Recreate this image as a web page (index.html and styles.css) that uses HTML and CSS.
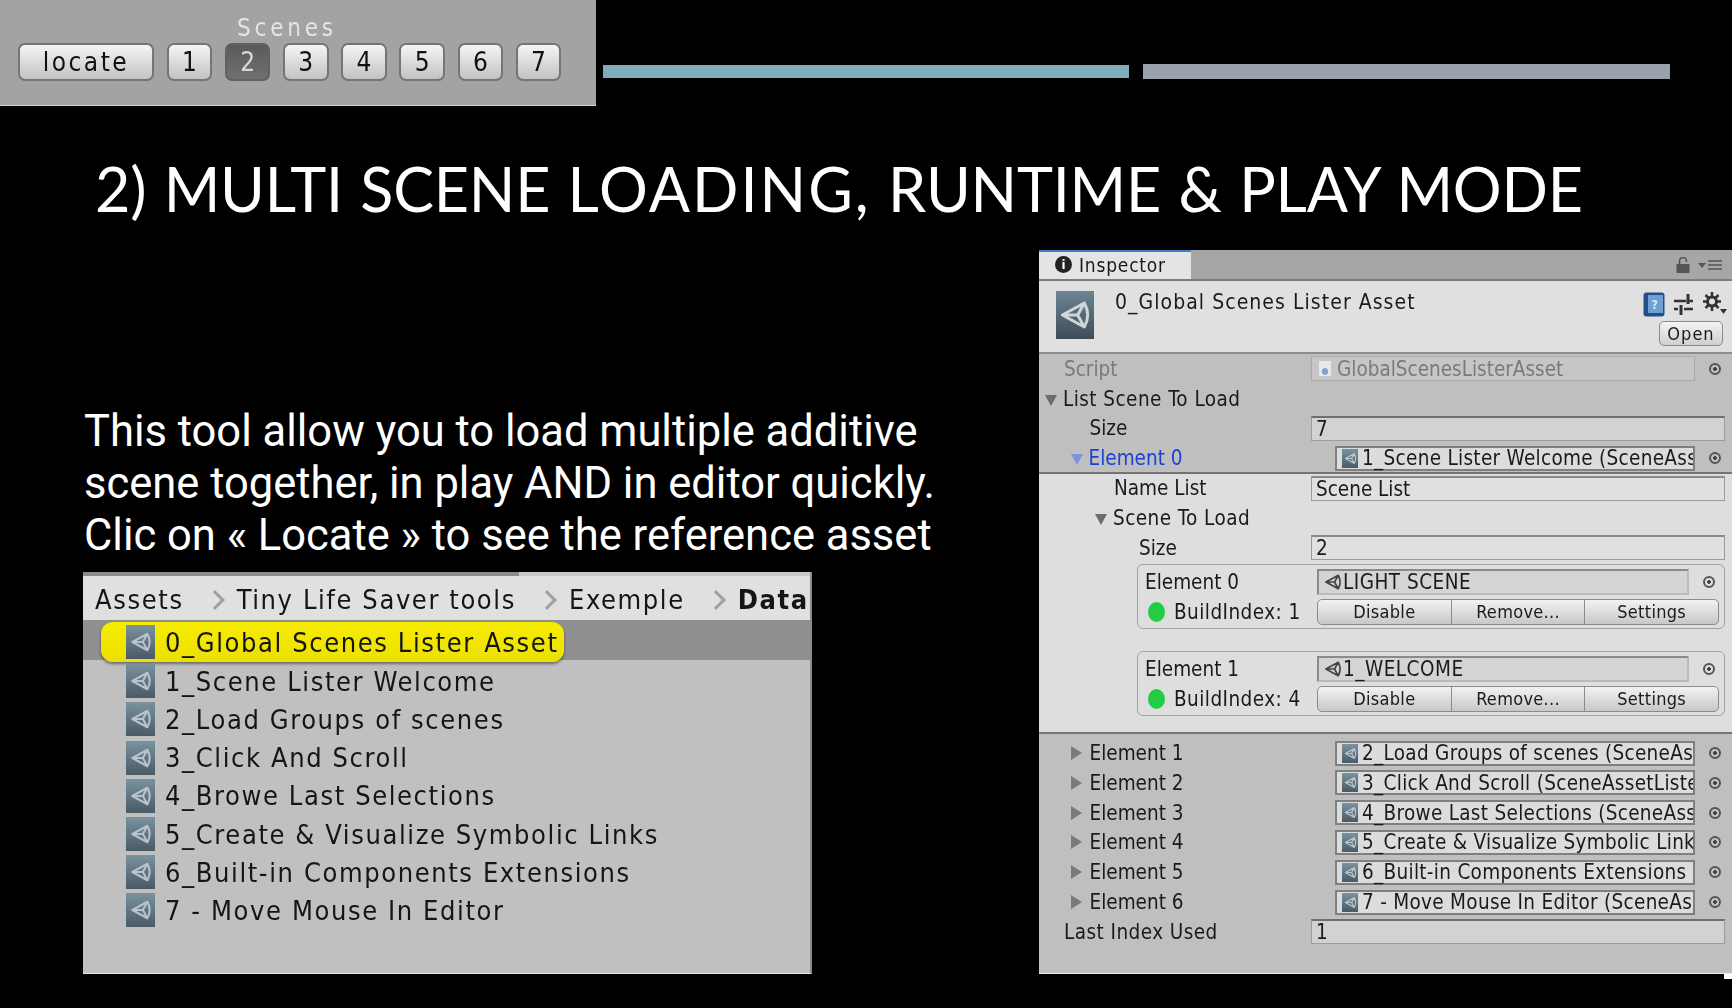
FILE: index.html
```html
<!DOCTYPE html>
<html lang="en">
<head>
    <meta charset="UTF-8">
    <title>Multi Scene Loading</title>
    <link rel="stylesheet" href="styles.css">
</head>
<body>
    <svg class="defs" width="0" height="0">
        <symbol id="unity" viewBox="0 0 24 24">
            <path d="M19 3 L2.5 12 L19 21 Q24 12 19 3 Z M14 12 H2.5 M14 12 L19 3 M14 12 L19 21" fill="none" stroke="currentColor" stroke-width="2.2" stroke-linejoin="round"/>
        </symbol>
    </svg>

    <div class="slide">
        <div class="top">
            <div class="toolbar">
                <div class="caption">Scenes</div>
                <div class="scene-buttons">
                    <span class="scene-btn locate">locate</span>
                    <span class="scene-btn">1</span>
                    <span class="scene-btn active">2</span>
                    <span class="scene-btn">3</span>
                    <span class="scene-btn">4</span>
                    <span class="scene-btn">5</span>
                    <span class="scene-btn">6</span>
                    <span class="scene-btn">7</span>
                </div>
            </div>
            <div class="bar bar-teal"></div>
            <div class="bar bar-grey"></div>
        </div>

        <h1>2) MULTI SCENE <span class="stretch">LOADING,</span> RUNTIME &amp; PLAY MODE</h1>

        <div class="main">
            <div class="left">
                <p class="intro">This tool allow you to load multiple additive<br>scene together, in play AND in editor quickly.<br>Clic on « Locate » to see the reference asset</p>
                <div class="project">
                    <div class="project-strip"></div>
                    <div class="crumbs">
                        <span class="crumb">Assets</span>
                        <span class="chev"></span>
                        <span class="crumb">Tiny Life Saver tools</span>
                        <span class="chev"></span>
                        <span class="crumb">Exemple</span>
                        <span class="chev"></span>
                        <span class="crumb strong">Data</span>
                    </div>
                    <div class="files">
                        <div class="file current"><span class="file-icon"><svg><use href="#unity"/></svg></span>0_Global Scenes Lister Asset</div>
                        <div class="file"><span class="file-icon"><svg><use href="#unity"/></svg></span>1_Scene Lister Welcome</div>
                        <div class="file"><span class="file-icon"><svg><use href="#unity"/></svg></span>2_Load Groups of scenes</div>
                        <div class="file"><span class="file-icon"><svg><use href="#unity"/></svg></span>3_Click And Scroll</div>
                        <div class="file"><span class="file-icon"><svg><use href="#unity"/></svg></span>4_Browe Last Selections</div>
                        <div class="file"><span class="file-icon"><svg><use href="#unity"/></svg></span>5_Create &amp; Visualize Symbolic Links</div>
                        <div class="file"><span class="file-icon"><svg><use href="#unity"/></svg></span>6_Built-in Components Extensions</div>
                        <div class="file"><span class="file-icon"><svg><use href="#unity"/></svg></span>7 - Move Mouse In Editor</div>
                    </div>
                </div>
            </div>

            <div class="inspector">
                <div class="tabbar">
                    <div class="tab"><span class="info">i</span>Inspector</div>
                    <div class="tab-tools">
                        <svg width="14" height="16" viewBox="0 0 14 16"><path d="M3.5 7V4a3.5 3.5 0 0 1 7 0V5" fill="none" stroke="#555" stroke-width="1.6"/><rect x="0.5" y="7" width="13" height="9" fill="#555"/></svg>
                        <svg width="24" height="12" viewBox="0 0 24 12"><path d="M0 4h8l-4 5z" fill="#555"/><path d="M10 2h14M10 6h14M10 10h14" stroke="#555" stroke-width="1.6"/></svg>
                    </div>
                </div>
                <div class="asset-head">
                    <span class="asset-icon"><svg><use href="#unity"/></svg></span>
                    <div class="asset-name">0_Global Scenes Lister Asset</div>
                    <div class="asset-tools">
                        <div class="asset-icons">
                            <svg width="22" height="25" viewBox="0 0 22 25"><rect x="0.5" y="0.5" width="21" height="24" rx="3" fill="#1f4f86"/><rect x="5" y="3" width="15" height="18" fill="#6f9fd6"/><text x="8.5" y="17" font-size="12" font-weight="bold" font-family="DejaVu Sans" fill="#d8e6f4">?</text></svg>
                            <svg width="19" height="21" viewBox="0 0 19 21"><path d="M0 7h12M15 7h4M0 15h4M10 15h9" stroke="#333" stroke-width="2.4"/><path d="M14 0v10M7 11v10" stroke="#333" stroke-width="3"/></svg>
                            <svg width="25" height="24" viewBox="0 0 25 24"><circle cx="10" cy="9.5" r="4.5" fill="none" stroke="#333" stroke-width="3"/><path d="M10 0v4M10 15v4M1 9.5h4M15 9.5h4M3.5 3l3 3M13.5 13l3 3M16.500 3l-3 3M6.500 13l-3 3" stroke="#333" stroke-width="2.6"/><path d="M18 17h7l-3.500 5z" fill="#333"/></svg>
                        </div>
                        <span class="open-btn">Open</span>
                    </div>
                </div>

                <div class="row script">
                    <div class="label lv0">Script</div>
                    <div class="field disabled"><span class="script-icon"></span>GlobalScenesListerAsset</div>
                    <span class="picker"></span>
                </div>
                <div class="row">
                    <div class="label lv0 open wide">List Scene To Load</div>
                </div>
                <div class="row">
                    <div class="label lv1">Size</div>
                    <div class="field">7</div>
                </div>
                <div class="row">
                    <div class="label lv1 open blue">Element 0</div>
                    <div class="ref"><span class="ref-icon"><svg><use href="#unity"/></svg></span>1_Scene Lister Welcome (SceneAssetLister)</div>
                    <span class="picker"></span>
                </div>

                <div class="expanded">
                    <div class="row">
                        <div class="label lv2">Name List</div>
                        <div class="field light">Scene List</div>
                    </div>
                    <div class="row">
                        <div class="label lv2 open wide">Scene To Load</div>
                    </div>
                    <div class="row">
                        <div class="label lv3">Size</div>
                        <div class="field light">2</div>
                    </div>

                    <div class="scene-box">
                        <div class="box-row">
                            <div class="box-label">Element 0</div>
                            <div class="obj"><svg class="obj-icon"><use href="#unity"/></svg>LIGHT SCENE</div>
                            <span class="picker"></span>
                        </div>
                        <div class="box-row">
                            <div class="box-label wide"><span class="dot"></span>BuildIndex: 1</div>
                            <div class="btn-group"><span>Disable</span><span>Remove...</span><span>Settings</span></div>
                        </div>
                    </div>
                    <div class="scene-box">
                        <div class="box-row">
                            <div class="box-label">Element 1</div>
                            <div class="obj"><svg class="obj-icon"><use href="#unity"/></svg>1_WELCOME</div>
                            <span class="picker"></span>
                        </div>
                        <div class="box-row">
                            <div class="box-label wide"><span class="dot"></span>BuildIndex: 4</div>
                            <div class="btn-group"><span>Disable</span><span>Remove...</span><span>Settings</span></div>
                        </div>
                    </div>
                </div>

                <div class="rest">
                    <div class="row">
                        <div class="label lv1 closed">Element 1</div>
                        <div class="ref"><span class="ref-icon"><svg><use href="#unity"/></svg></span>2_Load Groups of scenes (SceneAssetLister)</div>
                        <span class="picker"></span>
                    </div>
                    <div class="row">
                        <div class="label lv1 closed">Element 2</div>
                        <div class="ref"><span class="ref-icon"><svg><use href="#unity"/></svg></span>3_Click And Scroll (SceneAssetLister)</div>
                        <span class="picker"></span>
                    </div>
                    <div class="row">
                        <div class="label lv1 closed">Element 3</div>
                        <div class="ref"><span class="ref-icon"><svg><use href="#unity"/></svg></span>4_Browe Last Selections (SceneAssetLister)</div>
                        <span class="picker"></span>
                    </div>
                    <div class="row">
                        <div class="label lv1 closed">Element 4</div>
                        <div class="ref"><span class="ref-icon"><svg><use href="#unity"/></svg></span>5_Create &amp; Visualize Symbolic Links</div>
                        <span class="picker"></span>
                    </div>
                    <div class="row">
                        <div class="label lv1 closed">Element 5</div>
                        <div class="ref"><span class="ref-icon"><svg><use href="#unity"/></svg></span>6_Built-in Components Extensions (SceneAssetLister)</div>
                        <span class="picker"></span>
                    </div>
                    <div class="row">
                        <div class="label lv1 closed">Element 6</div>
                        <div class="ref"><span class="ref-icon"><svg><use href="#unity"/></svg></span>7 - Move Mouse In Editor (SceneAssetLister)</div>
                        <span class="picker"></span>
                    </div>
                    <div class="row">
                        <div class="label lv0 wide">Last Index Used</div>
                        <div class="field">1</div>
                    </div>
                </div>
                <div class="corner"></div>
            </div>
        </div>
    </div>
</body>
</html>
```

FILE: styles.css
```css
* {
    box-sizing: border-box;
}
body {
    margin: 0;
    background-color: #000;
    font-family: "DejaVu Sans", sans-serif;
}
.defs {
    position: absolute;
}
.slide {
    width: 1732px;
    height: 1008px;
    overflow: hidden;
    background-color: #000;
}

/* top strip */
.top {
    display: flex;
    align-items: flex-start;
    height: 106px;
}
.toolbar {
    width: 596px;
    height: 106px;
    padding: 13px 0 0 18px;
    background-color: #a3a3a3;
    border-bottom: 1px solid #d0d0d0;
    filter: blur(0.5px);
}
.caption {
    margin-left: 219px;
    height: 30px;
    line-height: 30px;
    font-size: 24px;
    font-stretch: condensed;
    letter-spacing: 3.8px;
    color: #e4e4e4;
}
.scene-buttons {
    display: flex;
    gap: 12.7px;
}
.scene-btn {
    display: flex;
    align-items: center;
    justify-content: center;
    width: 45.5px;
    height: 38px;
    border: 2px solid #757575;
    border-radius: 7px;
    background: linear-gradient(#f5f5f5, #c2c2c2);
    font-size: 26px;
    font-stretch: condensed;
    color: #111;
}
.locate {
    width: 136px;
    letter-spacing: 2.5px;
}
.active {
    background: linear-gradient(#5a5a5a, #707070);
    border-color: #616161;
    color: #d8d8d8;
}
.bar {
    height: 13px;
    width: 526px;
    margin-top: 65px;
}
.bar-teal {
    margin-left: 7px;
    background-color: #7fadbb;
}
.bar-grey {
    height: 15px;
    width: 527px;
    margin-top: 64px;
    margin-left: 14px;
    background-color: #9aa1ac;
}

h1 {
    margin: 47px 0 0 95px;
    height: 72px;
    line-height: 72px;
    font-family: Lato, sans-serif;
    font-size: 61px;
    font-weight: 400;
    letter-spacing: -0.2px;
    word-spacing: 2px;
    white-space: nowrap;
    color: #fff;
}
.stretch {
    letter-spacing: 2.05px;
}

.main {
    display: flex;
    margin-top: 25px;
}
.left {
    width: 1039px;
    padding-left: 83px;
}
.intro {
    margin: 156px 0 10px 1px;
    font-family: Roboto, sans-serif;
    font-size: 43.5px;
    line-height: 52px;
    color: #fff;
    white-space: nowrap;
}

/* project window */
.project {
    width: 729px;
    height: 402px;
    background-color: #c0c0c0;
    border-right: 2px solid #8a8a8a;
    border-bottom: 1px solid #e8e8e8;
    font-size: 27px;
    font-stretch: condensed;
    letter-spacing: 1.6px;
    color: #151515;
    filter: blur(0.5px);
}
.project-strip {
    height: 4px;
    background: linear-gradient(90deg, #8c8c8c 60%, #c8c8c8 60%);
}
.crumbs {
    display: flex;
    align-items: center;
    height: 44px;
    padding: 3px 0 0 12px;
    background-color: #e0e0e0;
    overflow: hidden;
    white-space: nowrap;
}
.crumb {
    flex: none;
}
.strong {
    font-weight: bold;
}
.chev {
    flex: none;
    width: 14px;
    height: 14px;
    margin: 0 15px 0 24px;
    border-top: 3px solid #a0a0a0;
    border-right: 3px solid #a0a0a0;
    transform: rotate(45deg);
}
.files {
    padding-top: 2px;
    background: linear-gradient(#8f8f8f 40px, transparent 40px);
}
.file {
    display: flex;
    align-items: center;
    gap: 10px;
    height: 38.2px;
    padding-left: 43px;
    white-space: nowrap;
}
.file-icon {
    flex: none;
    display: flex;
    align-items: center;
    justify-content: center;
    width: 29px;
    height: 34px;
    background: linear-gradient(#7a929f, #4a5a66);
    color: #b8c4cc;
}
.file-icon svg {
    width: 22px;
    height: 22px;
}
.current {
    width: fit-content;
    height: 40px;
    margin: 0 0 0.2px 18px;
    padding: 0 5px 0 25px;
    border-radius: 12px;
    background: linear-gradient(#f7ec00, #ece000);
    box-shadow: 0 2px 3px rgba(0, 0, 0, 0.45);
}

/* inspector */
.inspector {
    width: 693px;
    height: 730px;
    font-size: 20.5px;
    font-stretch: condensed;
    color: #1a1a1a;
    background: linear-gradient(#bfbfbf 723px, transparent 723px);
    filter: blur(0.45px);
}
.tabbar {
    display: flex;
    justify-content: space-between;
    height: 31px;
    background-color: #a6a6a6;
    border-bottom: 2px solid #7c7c7c;
}
.tab {
    display: flex;
    align-items: center;
    width: 152px;
    padding-left: 16px;
    padding-bottom: 2px;
    background-color: #e4e4e4;
    border-top: 2px solid #3f7fc6;
    font-size: 19px;
    letter-spacing: 0.8px;
}
.info {
    width: 17px;
    height: 17px;
    margin-right: 7px;
    border-radius: 50%;
    background-color: #222;
    color: #fff;
    font-size: 13px;
    font-weight: bold;
    line-height: 17px;
    text-align: center;
    letter-spacing: 0;
}
.tab-tools {
    display: flex;
    align-items: center;
    gap: 8px;
    padding-right: 10px;
}
.asset-head {
    display: flex;
    height: 73px;
    padding: 10px 9px 0 17px;
    background-color: #e0e0e0;
    border-bottom: 2px solid #8c8c8c;
}
.asset-icon {
    display: flex;
    align-items: center;
    justify-content: center;
    width: 38px;
    height: 48px;
    background: linear-gradient(#6d8492, #3e4c58);
    color: #cfd6da;
}
.asset-icon svg {
    width: 32px;
    height: 32px;
}
.asset-name {
    flex: 1;
    margin-left: 21px;
    font-size: 21px;
    line-height: 22px;
    letter-spacing: 1.05px;
    white-space: nowrap;
}
.asset-tools {
    display: flex;
    flex-direction: column;
    align-items: flex-end;
    gap: 4px;
}
.asset-icons {
    display: flex;
    align-items: center;
    gap: 9px;
    margin-right: -4px;
    height: 26px;
}
.open-btn {
    width: 64px;
    height: 25px;
    border: 1px solid #8a8a8a;
    border-radius: 5px;
    background: linear-gradient(#f4f4f4, #cfcfcf);
    font-size: 18px;
    line-height: 23px;
    letter-spacing: 1px;
    text-align: center;
}
.row {
    display: flex;
    align-items: center;
    height: 29.8px;
    padding-right: 7px;
    white-space: nowrap;
}
.label {
    flex: none;
    width: 272px;
}
.wide {
    letter-spacing: 0.45px;
}
.lv0 {
    padding-left: 25px;
}
.lv1 {
    padding-left: 50.5px;
}
.lv2 {
    padding-left: 75px;
}
.lv3 {
    padding-left: 100px;
}
.open::before,
.closed::before {
    content: "";
    display: inline-block;
    margin-left: -19px;
    margin-right: 6px;
}
.open::before {
    border-left: 6.5px solid transparent;
    border-right: 6.5px solid transparent;
    border-top: 11px solid #6c6c6c;
}
.closed::before {
    margin-left: -19px;
    margin-right: 8px;
    border-top: 7px solid transparent;
    border-bottom: 7px solid transparent;
    border-left: 11px solid #7a7a7a;
}
.blue {
    color: #1c3fd6;
}
.blue::before {
    border-top-color: #7d94d8;
}
.field {
    flex: 1;
    min-width: 0;
    height: 25px;
    padding-left: 4px;
    line-height: 22px;
    background-color: #d2d2d2;
    border: 1px solid #9c9c9c;
    border-top: 2px solid #6f6f6f;
}
.light {
    background-color: #e0e0e0;
    border-top-color: #8a8a8a;
}
.disabled {
    display: flex;
    align-items: center;
    background-color: #c6c6c6;
    border: 1px solid #ababab;
    color: #7a7a7a;
}
.script {
    color: #7a7a7a;
}
.script-icon {
    width: 12px;
    height: 15px;
    margin: 0 6px 0 3px;
    background: radial-gradient(circle at 50% 70%, #7fa4cc 25%, #e4e8ec 30%);
}
.ref {
    flex: 1;
    min-width: 0;
    height: 25px;
    margin-left: 24px;
    padding-left: 5px;
    display: flex;
    align-items: center;
    gap: 4px;
    overflow-x: clip;
    letter-spacing: 0.3px;
    background-color: #dcdcdc;
    border: 2px solid #7f7f7f;
}
.ref-icon {
    flex: none;
    display: flex;
    align-items: center;
    justify-content: center;
    width: 16px;
    height: 19px;
    background: linear-gradient(#7a929f, #4a5a66);
    color: #b8c4cc;
}
.ref-icon svg {
    width: 13px;
    height: 13px;
}
.picker {
    flex: none;
    width: 12px;
    height: 12px;
    margin: 0 4px 0 14px;
    border-radius: 50%;
    border: 2px solid #555;
    background: radial-gradient(#444 30%, transparent 35%);
}
.expanded {
    height: 262px;
    margin-top: -1px;
    background-color: #dedede;
    border-top: 2px solid #747474;
    border-bottom: 2px solid #747474;
}
.expanded .row:first-child {
    margin-top: -1px;
}
.scene-box {
    height: 65px;
    margin: 1.5px 7px 22px 98px;
    padding: 2px 5px 0 0;
    border: 1px solid #a0a0a0;
    border-radius: 6px;
}
.box-row {
    display: flex;
    align-items: center;
    height: 30px;
}
.box-label {
    flex: none;
    display: flex;
    align-items: center;
    width: 179px;
    padding-left: 7px;
    white-space: nowrap;
}
.dot {
    flex: none;
    width: 17px;
    height: 20px;
    margin: 0 9px 0 3px;
    border-radius: 50%;
    background-color: #22cc44;
}
.obj {
    flex: 1;
    display: flex;
    align-items: center;
    height: 26px;
    padding-left: 5px;
    letter-spacing: 0.5px;
    background-color: #d4d4d4;
    border: 2px solid #8a8a8a;
    border-right-color: #bbb;
    border-bottom-color: #bbb;
}
.obj-icon {
    width: 18px;
    height: 18px;
    margin-right: 1px;
    color: #444;
}
.btn-group {
    flex: 1;
    display: flex;
    height: 26px;
    border: 1px solid #8c8c8c;
    border-radius: 5px;
    background: linear-gradient(#f2f2f2, #c8c8c8);
    font-size: 18px;
    letter-spacing: 0.3px;
}
.btn-group span {
    flex: 1;
    text-align: center;
    line-height: 24px;
    border-left: 1px solid #8c8c8c;
}
.btn-group span:first-child {
    border-left: none;
}
.rest {
    height: 240px;
    padding-top: 4px;
    border-bottom: 1px solid #eee;
}
.corner {
    width: 8px;
    height: 5px;
    margin-left: auto;
    background-color: #fff;
}
```
